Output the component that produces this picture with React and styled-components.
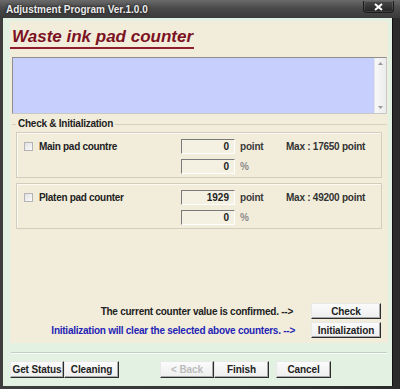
import React from "react";
import styled, { createGlobalStyle } from "styled-components";

const Global = createGlobalStyle`
  html, body { margin: 0; padding: 0; }
  body {
    width: 400px;
    height: 389px;
    overflow: hidden;
    background: #2a2a2a;
    font-family: "Liberation Sans", Arial, sans-serif;
  }
`;

const Window = styled.div`
  width: 400px;
  height: 389px;
  display: flex;
  flex-direction: column;
  background: linear-gradient(to right, #3e3e3e, #353535 60%, #2b2b2b);
  box-sizing: border-box;
`;

const TitleBar = styled.div`
  height: 18px;
  display: flex;
  align-items: flex-start;
  justify-content: space-between;
  background: linear-gradient(to bottom, #6a6a6a 0%, #4a4a4a 45%, #3a3a3a 100%);
`;

const Caption = styled.div`
  padding: 4px 0 0 6px;
  font-size: 10px;
  font-weight: bold;
  color: #ececec;
  line-height: 12px;
  text-shadow: 0 0 3px #000;
`;

const CloseBtn = styled.div`
  width: 29px;
  height: 11px;
  margin: 1px 6px 0 0;
  display: flex;
  align-items: center;
  justify-content: center;
  border: 1px solid #1c1c1c;
  border-top: none;
  border-radius: 0 0 4px 4px;
  background: linear-gradient(to bottom, #4a4a4a, #222);
  box-shadow: inset 0 0 0 1px rgba(255, 255, 255, 0.12);
`;

const Client = styled.div`
  flex: 1;
  margin: 0 7px 3px 3px;
  padding: 3px 4px 0 7px;
  background: #e2f1e1;
  border-right: 1px solid #111;
  display: flex;
  flex-direction: column;
`;

const Panel = styled.div`
  height: 322px;
  background: #f2eddb;
  display: flex;
  flex-direction: column;
`;

const Heading = styled.div`
  align-self: flex-start;
  margin-top: 7px;
  padding: 0 1px 1px 2px;
  font-size: 17px;
  line-height: 18px;
  font-weight: bold;
  font-style: italic;
  color: #7c1222;
  border-bottom: 2px solid #8e1e2c;
`;

const LogBox = styled.div`
  margin: 8px 1px 0 2px;
  height: 55px;
  display: flex;
  background: #c7d0fd;
  border: 1px solid #8e8e8e;
  border-right-color: #c8c8c8;
  border-bottom-color: #c8c8c8;
`;

const LogText = styled.div`
  flex: 1;
`;

const ScrollBar = styled.div`
  width: 11px;
  display: flex;
  flex-direction: column;
  justify-content: space-between;
  align-items: center;
  padding: 4px 0;
  background: linear-gradient(to right, #f8f8f8, #ececec);
  border-left: 1px solid #e4e4e4;
`;

const Group = styled.fieldset`
  margin: 4px 1px 0 2px;
  padding: 2px 5px 3px 4px;
  border: none;
  border-top: 1px solid #d6d2c2;
  display: flex;
  flex-direction: column;
  gap: 5px;
`;

const Legend = styled.legend`
  margin-left: 0;
  padding: 0 2px;
  font-size: 10px;
  line-height: 12px;
  font-weight: bold;
  letter-spacing: -0.25px;
  color: #1e1e1e;
`;

const CounterBox = styled.div`
  display: grid;
  grid-template-columns: 164px 54px 51px auto;
  grid-template-rows: 15px 15px;
  row-gap: 5px;
  align-items: center;
  padding: 6px 0 3px 0;
  border: 1px solid #d2cebf;
  box-shadow: inset 1px 1px 0 #fbf9f2;
`;

const Label = styled.label`
  display: flex;
  align-items: center;
  gap: 6px;
  padding-left: 7px;
  font-size: 10px;
  font-weight: bold;
  letter-spacing: -0.3px;
  color: #222;
`;

const Check = styled.span`
  width: 9px;
  height: 9px;
  box-sizing: border-box;
  border: 1px solid #b4b4b4;
  background: linear-gradient(135deg, #e2e2e2, #fafafa);
`;

const Field = styled.div`
  height: 15px;
  box-sizing: border-box;
  padding-right: 5px;
  text-align: right;
  font-size: 10px;
  line-height: 13px;
  font-weight: bold;
  color: #222;
  background: #f4f0e2;
  border: 1px solid #fff;
  border-top-color: #7a7a7a;
  border-left-color: #7a7a7a;
`;

const Unit = styled.span`
  padding-left: 5px;
  font-size: 10px;
  font-weight: bold;
  letter-spacing: -0.2px;
  color: ${(p) => (p.$muted ? "#8a8a8a" : "#3a3a3a")};
`;

const Max = styled.span`
  font-size: 10px;
  font-weight: bold;
  letter-spacing: -0.25px;
  color: #333;
`;

const Actions = styled.div`
  margin-top: 69px;
  display: flex;
  flex-direction: column;
  gap: 3px;
`;

const ActionRow = styled.div`
  display: flex;
  align-items: center;
  justify-content: flex-end;
  gap: ${(p) => p.$gap}px;
  padding-right: 1px;
`;

const Note = styled.span`
  font-size: 10px;
  font-weight: bold;
  letter-spacing: -0.25px;
  color: ${(p) => (p.$blue ? "#2424b4" : "#222")};
`;

const Button = styled.button`
  width: ${(p) => p.$w || 55}px;
  height: ${(p) => p.$h || 17}px;
  padding: 0;
  font-family: inherit;
  font-size: 10px;
  font-weight: bold;
  letter-spacing: -0.1px;
  color: ${(p) => (p.disabled ? "#bcbcbc" : "#222")};
  background: linear-gradient(to bottom, #fbfbfb, #eeeeee);
  border: 1px solid #2c2c2c;
  border-top-color: #e8e8e8;
  border-left-color: #e8e8e8;
  box-shadow: inset -1px -1px 0 #a8a8a8;
`;

const Separator = styled.div`
  margin: 9px 1px 0 1px;
  height: 0;
  border-top: 1px solid #c4cfc4;
  border-bottom: 1px solid #f8fcf8;
`;

const Footer = styled.div`
  margin-top: 7px;
  display: flex;
  align-items: center;
`;

const Spacer = styled.div`
  width: ${(p) => p.$w}px;
`;

function Counter({ name, point, percent, max }) {
  return (
    <CounterBox>
      <Label>
        <Check />
        {name}
      </Label>
      <Field>{point}</Field>
      <Unit>point</Unit>
      <Max>Max : {max} point</Max>
      <span />
      <Field>{percent}</Field>
      <Unit $muted>%</Unit>
      <span />
    </CounterBox>
  );
}

export default function App() {
  return (
    <>
      <Global />
      <Window>
        <TitleBar>
          <Caption>Adjustment Program Ver.1.0.0</Caption>
          <CloseBtn>
            <svg width="9" height="8" viewBox="0 0 9 8">
              <path d="M1 1 L8 7 M8 1 L1 7" stroke="#fff" strokeWidth="2" />
            </svg>
          </CloseBtn>
        </TitleBar>
        <Client>
          <Panel>
            <Heading>Waste ink pad counter</Heading>
            <LogBox>
              <LogText />
              <ScrollBar>
                <svg width="5" height="3" viewBox="0 0 5 3">
                  <path d="M0 3 L2.5 0 L5 3 Z" fill="#9a9a9a" />
                </svg>
                <svg width="5" height="3" viewBox="0 0 5 3">
                  <path d="M0 0 L2.5 3 L5 0 Z" fill="#9a9a9a" />
                </svg>
              </ScrollBar>
            </LogBox>
            <Group>
              <Legend>Check &amp; Initialization</Legend>
              <Counter name="Main pad countre" point="0" percent="0" max="17650" />
              <Counter name="Platen pad counter" point="1929" percent="0" max="49200" />
              <Actions>
                <ActionRow $gap={18}>
                  <Note>The current counter value is confirmed. --&gt;</Note>
                  <Button $w={70} $h={16}>Check</Button>
                </ActionRow>
                <ActionRow $gap={16}>
                  <Note $blue>Initialization will clear the selected above counters. --&gt;</Note>
                  <Button $w={70} $h={16}>Initialization</Button>
                </ActionRow>
              </Actions>
            </Group>
          </Panel>
          <Separator />
          <Footer>
            <Button $w={54}>Get Status</Button>
            <Button $w={55}>Cleaning</Button>
            <Spacer $w={41} />
            <Button $w={54} disabled>&lt; Back</Button>
            <Button $w={55}>Finish</Button>
            <Spacer $w={7} />
            <Button $w={55}>Cancel</Button>
          </Footer>
        </Client>
      </Window>
    </>
  );
}
